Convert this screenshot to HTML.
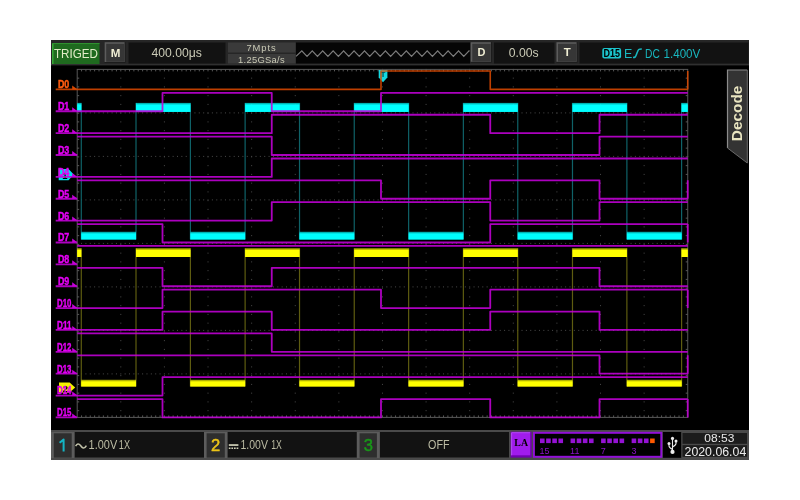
<!DOCTYPE html>
<html><head><meta charset="utf-8"><style>
html,body{margin:0;padding:0;background:#fff;width:800px;height:500px;overflow:hidden}
svg{display:block;font-family:"Liberation Sans",sans-serif;will-change:transform}
</style></head><body>
<svg width="800" height="500" viewBox="0 0 800 500">
<rect x="51" y="40" width="698" height="420" fill="#000"/>
<rect x="51" y="40" width="698" height="25" fill="#262626"/>
<rect x="51" y="63.8" width="698" height="1.6" fill="#303030"/>
<rect x="52" y="43" width="47.5" height="21" fill="#1f6a1f"/>
<rect x="52" y="43" width="1.5" height="21" fill="#36a636"/>
<rect x="52" y="43" width="47.5" height="1" fill="#2f8f2f"/>
<text x="76" y="58.2" font-size="12.6" fill="#e2ecc8" text-anchor="middle" textLength="44" lengthAdjust="spacingAndGlyphs">TRIGED</text>
<rect x="104.6" y="42.2" width="21" height="20.8" fill="#1c1c1c"/>
<rect x="104.6" y="42.2" width="20" height="19.8" fill="#5c5c5c"/>
<rect x="106.19999999999999" y="43.800000000000004" width="18.2" height="18.0" fill="#363636"/>
<text x="115.5" y="56.6" font-size="11.6" font-weight="bold" fill="#f0eed4" text-anchor="middle">M</text>
<rect x="128.5" y="42.5" width="97" height="21" fill="#121212"/>
<text x="176.7" y="57" font-size="12.2" fill="#cacab6" text-anchor="middle">400.00μs</text>
<rect x="228" y="42.5" width="67.5" height="10" fill="#3a3a3a"/>
<rect x="228" y="54" width="67.5" height="9.5" fill="#3a3a3a"/>
<text x="261.5" y="50.9" font-size="9.4" fill="#cacab6" text-anchor="middle" letter-spacing="0.9">7Mpts</text>
<text x="261.5" y="62.6" font-size="9.4" fill="#cacab6" text-anchor="middle" letter-spacing="0.3">1.25GSa/s</text>
<rect x="296" y="42.5" width="174" height="21" fill="#050505"/>
<polyline points="296.00,56.40 301.80,50.80 307.03,56.40 312.25,50.80 317.48,56.40 322.70,50.80 327.93,56.40 333.15,50.80 338.38,56.40 343.60,50.80 348.83,56.40 354.05,50.80 359.28,56.40 364.50,50.80 369.73,56.40 374.95,50.80 380.18,56.40 385.40,50.80 390.62,56.40 395.85,50.80 401.08,56.40 406.30,50.80 411.53,56.40 416.75,50.80 421.98,56.40 427.20,50.80 432.43,56.40 437.65,50.80 442.88,56.40 448.10,50.80 453.33,56.40 458.55,50.80 463.78,56.40 469.00,50.80 469.50,51.34" stroke="#7c7c7c" stroke-width="1.25" fill="none"/>
<rect x="470.7" y="42.2" width="21.2" height="20.6" fill="#1c1c1c"/>
<rect x="470.7" y="42.2" width="20.2" height="19.6" fill="#5c5c5c"/>
<rect x="472.3" y="43.800000000000004" width="18.4" height="17.8" fill="#363636"/>
<text x="481.6" y="56.2" font-size="11" font-weight="bold" fill="#f0eed4" text-anchor="middle">D</text>
<rect x="494" y="42.5" width="60.5" height="21" fill="#121212"/>
<text x="523.7" y="57" font-size="12.2" fill="#cacab6" text-anchor="middle">0.00s</text>
<rect x="556.4" y="42.2" width="21.2" height="20.6" fill="#1c1c1c"/>
<rect x="556.4" y="42.2" width="20.2" height="19.6" fill="#5c5c5c"/>
<rect x="558.0" y="43.800000000000004" width="18.4" height="17.8" fill="#363636"/>
<text x="567.2" y="56.4" font-size="11.4" font-weight="bold" fill="#f0eed4" text-anchor="middle">T</text>
<rect x="579.5" y="42.5" width="169" height="21" fill="#121212"/>
<rect x="602.3" y="48" width="18.8" height="10.6" rx="2" fill="#1cc4cc"/>
<text x="611.7" y="57.2" font-size="10.2" font-weight="bold" fill="#000" text-anchor="middle" textLength="16.4" lengthAdjust="spacingAndGlyphs">D15</text>
<text x="624" y="58" font-size="12.4" fill="#19b6be">E</text>
<path d="M633 57.5 C635.5 57.5 635.5 57 637 53 C638.5 49 638.5 49 641.8 49" stroke="#19b6be" stroke-width="1.6" fill="none"/>
<text x="645" y="58" font-size="12.4" fill="#19b6be" textLength="14.8" lengthAdjust="spacingAndGlyphs">DC</text>
<text x="663.5" y="58" font-size="12.4" fill="#19b6be" textLength="36.8" lengthAdjust="spacingAndGlyphs">1.400V</text>
<path d="M76.70 112.90h1M81.06 112.90h1M85.42 112.90h1M89.78 112.90h1M94.14 112.90h1M98.50 112.90h1M102.87 112.90h1M107.23 112.90h1M111.59 112.90h1M115.95 112.90h1M120.31 112.90h1M124.67 112.90h1M129.03 112.90h1M133.39 112.90h1M137.75 112.90h1M142.12 112.90h1M146.48 112.90h1M150.84 112.90h1M155.20 112.90h1M159.56 112.90h1M163.92 112.90h1M168.28 112.90h1M172.64 112.90h1M177.00 112.90h1M181.36 112.90h1M185.73 112.90h1M190.09 112.90h1M194.45 112.90h1M198.81 112.90h1M203.17 112.90h1M207.53 112.90h1M211.89 112.90h1M216.25 112.90h1M220.61 112.90h1M224.97 112.90h1M229.33 112.90h1M233.70 112.90h1M238.06 112.90h1M242.42 112.90h1M246.78 112.90h1M251.14 112.90h1M255.50 112.90h1M259.86 112.90h1M264.22 112.90h1M268.58 112.90h1M272.94 112.90h1M277.31 112.90h1M281.67 112.90h1M286.03 112.90h1M290.39 112.90h1M294.75 112.90h1M299.11 112.90h1M303.47 112.90h1M307.83 112.90h1M312.19 112.90h1M316.56 112.90h1M320.92 112.90h1M325.28 112.90h1M329.64 112.90h1M334.00 112.90h1M338.36 112.90h1M342.72 112.90h1M347.08 112.90h1M351.44 112.90h1M355.80 112.90h1M360.17 112.90h1M364.53 112.90h1M368.89 112.90h1M373.25 112.90h1M377.61 112.90h1M381.97 112.90h1M386.33 112.90h1M390.69 112.90h1M395.05 112.90h1M399.41 112.90h1M403.77 112.90h1M408.14 112.90h1M412.50 112.90h1M416.86 112.90h1M421.22 112.90h1M425.58 112.90h1M429.94 112.90h1M434.30 112.90h1M438.66 112.90h1M443.02 112.90h1M447.38 112.90h1M451.75 112.90h1M456.11 112.90h1M460.47 112.90h1M464.83 112.90h1M469.19 112.90h1M473.55 112.90h1M477.91 112.90h1M482.27 112.90h1M486.63 112.90h1M490.99 112.90h1M495.36 112.90h1M499.72 112.90h1M504.08 112.90h1M508.44 112.90h1M512.80 112.90h1M517.16 112.90h1M521.52 112.90h1M525.88 112.90h1M530.24 112.90h1M534.61 112.90h1M538.97 112.90h1M543.33 112.90h1M547.69 112.90h1M552.05 112.90h1M556.41 112.90h1M560.77 112.90h1M565.13 112.90h1M569.49 112.90h1M573.85 112.90h1M578.22 112.90h1M582.58 112.90h1M586.94 112.90h1M591.30 112.90h1M595.66 112.90h1M600.02 112.90h1M604.38 112.90h1M608.74 112.90h1M613.10 112.90h1M617.46 112.90h1M621.83 112.90h1M626.19 112.90h1M630.55 112.90h1M634.91 112.90h1M639.27 112.90h1M643.63 112.90h1M647.99 112.90h1M652.35 112.90h1M656.71 112.90h1M661.07 112.90h1M665.44 112.90h1M669.80 112.90h1M674.16 112.90h1M678.52 112.90h1M682.88 112.90h1M687.24 112.90h1M76.70 156.40h1M81.06 156.40h1M85.42 156.40h1M89.78 156.40h1M94.14 156.40h1M98.50 156.40h1M102.87 156.40h1M107.23 156.40h1M111.59 156.40h1M115.95 156.40h1M120.31 156.40h1M124.67 156.40h1M129.03 156.40h1M133.39 156.40h1M137.75 156.40h1M142.12 156.40h1M146.48 156.40h1M150.84 156.40h1M155.20 156.40h1M159.56 156.40h1M163.92 156.40h1M168.28 156.40h1M172.64 156.40h1M177.00 156.40h1M181.36 156.40h1M185.73 156.40h1M190.09 156.40h1M194.45 156.40h1M198.81 156.40h1M203.17 156.40h1M207.53 156.40h1M211.89 156.40h1M216.25 156.40h1M220.61 156.40h1M224.97 156.40h1M229.33 156.40h1M233.70 156.40h1M238.06 156.40h1M242.42 156.40h1M246.78 156.40h1M251.14 156.40h1M255.50 156.40h1M259.86 156.40h1M264.22 156.40h1M268.58 156.40h1M272.94 156.40h1M277.31 156.40h1M281.67 156.40h1M286.03 156.40h1M290.39 156.40h1M294.75 156.40h1M299.11 156.40h1M303.47 156.40h1M307.83 156.40h1M312.19 156.40h1M316.56 156.40h1M320.92 156.40h1M325.28 156.40h1M329.64 156.40h1M334.00 156.40h1M338.36 156.40h1M342.72 156.40h1M347.08 156.40h1M351.44 156.40h1M355.80 156.40h1M360.17 156.40h1M364.53 156.40h1M368.89 156.40h1M373.25 156.40h1M377.61 156.40h1M381.97 156.40h1M386.33 156.40h1M390.69 156.40h1M395.05 156.40h1M399.41 156.40h1M403.77 156.40h1M408.14 156.40h1M412.50 156.40h1M416.86 156.40h1M421.22 156.40h1M425.58 156.40h1M429.94 156.40h1M434.30 156.40h1M438.66 156.40h1M443.02 156.40h1M447.38 156.40h1M451.75 156.40h1M456.11 156.40h1M460.47 156.40h1M464.83 156.40h1M469.19 156.40h1M473.55 156.40h1M477.91 156.40h1M482.27 156.40h1M486.63 156.40h1M490.99 156.40h1M495.36 156.40h1M499.72 156.40h1M504.08 156.40h1M508.44 156.40h1M512.80 156.40h1M517.16 156.40h1M521.52 156.40h1M525.88 156.40h1M530.24 156.40h1M534.61 156.40h1M538.97 156.40h1M543.33 156.40h1M547.69 156.40h1M552.05 156.40h1M556.41 156.40h1M560.77 156.40h1M565.13 156.40h1M569.49 156.40h1M573.85 156.40h1M578.22 156.40h1M582.58 156.40h1M586.94 156.40h1M591.30 156.40h1M595.66 156.40h1M600.02 156.40h1M604.38 156.40h1M608.74 156.40h1M613.10 156.40h1M617.46 156.40h1M621.83 156.40h1M626.19 156.40h1M630.55 156.40h1M634.91 156.40h1M639.27 156.40h1M643.63 156.40h1M647.99 156.40h1M652.35 156.40h1M656.71 156.40h1M661.07 156.40h1M665.44 156.40h1M669.80 156.40h1M674.16 156.40h1M678.52 156.40h1M682.88 156.40h1M687.24 156.40h1M76.70 199.90h1M81.06 199.90h1M85.42 199.90h1M89.78 199.90h1M94.14 199.90h1M98.50 199.90h1M102.87 199.90h1M107.23 199.90h1M111.59 199.90h1M115.95 199.90h1M120.31 199.90h1M124.67 199.90h1M129.03 199.90h1M133.39 199.90h1M137.75 199.90h1M142.12 199.90h1M146.48 199.90h1M150.84 199.90h1M155.20 199.90h1M159.56 199.90h1M163.92 199.90h1M168.28 199.90h1M172.64 199.90h1M177.00 199.90h1M181.36 199.90h1M185.73 199.90h1M190.09 199.90h1M194.45 199.90h1M198.81 199.90h1M203.17 199.90h1M207.53 199.90h1M211.89 199.90h1M216.25 199.90h1M220.61 199.90h1M224.97 199.90h1M229.33 199.90h1M233.70 199.90h1M238.06 199.90h1M242.42 199.90h1M246.78 199.90h1M251.14 199.90h1M255.50 199.90h1M259.86 199.90h1M264.22 199.90h1M268.58 199.90h1M272.94 199.90h1M277.31 199.90h1M281.67 199.90h1M286.03 199.90h1M290.39 199.90h1M294.75 199.90h1M299.11 199.90h1M303.47 199.90h1M307.83 199.90h1M312.19 199.90h1M316.56 199.90h1M320.92 199.90h1M325.28 199.90h1M329.64 199.90h1M334.00 199.90h1M338.36 199.90h1M342.72 199.90h1M347.08 199.90h1M351.44 199.90h1M355.80 199.90h1M360.17 199.90h1M364.53 199.90h1M368.89 199.90h1M373.25 199.90h1M377.61 199.90h1M381.97 199.90h1M386.33 199.90h1M390.69 199.90h1M395.05 199.90h1M399.41 199.90h1M403.77 199.90h1M408.14 199.90h1M412.50 199.90h1M416.86 199.90h1M421.22 199.90h1M425.58 199.90h1M429.94 199.90h1M434.30 199.90h1M438.66 199.90h1M443.02 199.90h1M447.38 199.90h1M451.75 199.90h1M456.11 199.90h1M460.47 199.90h1M464.83 199.90h1M469.19 199.90h1M473.55 199.90h1M477.91 199.90h1M482.27 199.90h1M486.63 199.90h1M490.99 199.90h1M495.36 199.90h1M499.72 199.90h1M504.08 199.90h1M508.44 199.90h1M512.80 199.90h1M517.16 199.90h1M521.52 199.90h1M525.88 199.90h1M530.24 199.90h1M534.61 199.90h1M538.97 199.90h1M543.33 199.90h1M547.69 199.90h1M552.05 199.90h1M556.41 199.90h1M560.77 199.90h1M565.13 199.90h1M569.49 199.90h1M573.85 199.90h1M578.22 199.90h1M582.58 199.90h1M586.94 199.90h1M591.30 199.90h1M595.66 199.90h1M600.02 199.90h1M604.38 199.90h1M608.74 199.90h1M613.10 199.90h1M617.46 199.90h1M621.83 199.90h1M626.19 199.90h1M630.55 199.90h1M634.91 199.90h1M639.27 199.90h1M643.63 199.90h1M647.99 199.90h1M652.35 199.90h1M656.71 199.90h1M661.07 199.90h1M665.44 199.90h1M669.80 199.90h1M674.16 199.90h1M678.52 199.90h1M682.88 199.90h1M687.24 199.90h1M76.70 243.40h1M81.06 243.40h1M85.42 243.40h1M89.78 243.40h1M94.14 243.40h1M98.50 243.40h1M102.87 243.40h1M107.23 243.40h1M111.59 243.40h1M115.95 243.40h1M120.31 243.40h1M124.67 243.40h1M129.03 243.40h1M133.39 243.40h1M137.75 243.40h1M142.12 243.40h1M146.48 243.40h1M150.84 243.40h1M155.20 243.40h1M159.56 243.40h1M163.92 243.40h1M168.28 243.40h1M172.64 243.40h1M177.00 243.40h1M181.36 243.40h1M185.73 243.40h1M190.09 243.40h1M194.45 243.40h1M198.81 243.40h1M203.17 243.40h1M207.53 243.40h1M211.89 243.40h1M216.25 243.40h1M220.61 243.40h1M224.97 243.40h1M229.33 243.40h1M233.70 243.40h1M238.06 243.40h1M242.42 243.40h1M246.78 243.40h1M251.14 243.40h1M255.50 243.40h1M259.86 243.40h1M264.22 243.40h1M268.58 243.40h1M272.94 243.40h1M277.31 243.40h1M281.67 243.40h1M286.03 243.40h1M290.39 243.40h1M294.75 243.40h1M299.11 243.40h1M303.47 243.40h1M307.83 243.40h1M312.19 243.40h1M316.56 243.40h1M320.92 243.40h1M325.28 243.40h1M329.64 243.40h1M334.00 243.40h1M338.36 243.40h1M342.72 243.40h1M347.08 243.40h1M351.44 243.40h1M355.80 243.40h1M360.17 243.40h1M364.53 243.40h1M368.89 243.40h1M373.25 243.40h1M377.61 243.40h1M381.97 243.40h1M386.33 243.40h1M390.69 243.40h1M395.05 243.40h1M399.41 243.40h1M403.77 243.40h1M408.14 243.40h1M412.50 243.40h1M416.86 243.40h1M421.22 243.40h1M425.58 243.40h1M429.94 243.40h1M434.30 243.40h1M438.66 243.40h1M443.02 243.40h1M447.38 243.40h1M451.75 243.40h1M456.11 243.40h1M460.47 243.40h1M464.83 243.40h1M469.19 243.40h1M473.55 243.40h1M477.91 243.40h1M482.27 243.40h1M486.63 243.40h1M490.99 243.40h1M495.36 243.40h1M499.72 243.40h1M504.08 243.40h1M508.44 243.40h1M512.80 243.40h1M517.16 243.40h1M521.52 243.40h1M525.88 243.40h1M530.24 243.40h1M534.61 243.40h1M538.97 243.40h1M543.33 243.40h1M547.69 243.40h1M552.05 243.40h1M556.41 243.40h1M560.77 243.40h1M565.13 243.40h1M569.49 243.40h1M573.85 243.40h1M578.22 243.40h1M582.58 243.40h1M586.94 243.40h1M591.30 243.40h1M595.66 243.40h1M600.02 243.40h1M604.38 243.40h1M608.74 243.40h1M613.10 243.40h1M617.46 243.40h1M621.83 243.40h1M626.19 243.40h1M630.55 243.40h1M634.91 243.40h1M639.27 243.40h1M643.63 243.40h1M647.99 243.40h1M652.35 243.40h1M656.71 243.40h1M661.07 243.40h1M665.44 243.40h1M669.80 243.40h1M674.16 243.40h1M678.52 243.40h1M682.88 243.40h1M687.24 243.40h1M76.70 286.90h1M81.06 286.90h1M85.42 286.90h1M89.78 286.90h1M94.14 286.90h1M98.50 286.90h1M102.87 286.90h1M107.23 286.90h1M111.59 286.90h1M115.95 286.90h1M120.31 286.90h1M124.67 286.90h1M129.03 286.90h1M133.39 286.90h1M137.75 286.90h1M142.12 286.90h1M146.48 286.90h1M150.84 286.90h1M155.20 286.90h1M159.56 286.90h1M163.92 286.90h1M168.28 286.90h1M172.64 286.90h1M177.00 286.90h1M181.36 286.90h1M185.73 286.90h1M190.09 286.90h1M194.45 286.90h1M198.81 286.90h1M203.17 286.90h1M207.53 286.90h1M211.89 286.90h1M216.25 286.90h1M220.61 286.90h1M224.97 286.90h1M229.33 286.90h1M233.70 286.90h1M238.06 286.90h1M242.42 286.90h1M246.78 286.90h1M251.14 286.90h1M255.50 286.90h1M259.86 286.90h1M264.22 286.90h1M268.58 286.90h1M272.94 286.90h1M277.31 286.90h1M281.67 286.90h1M286.03 286.90h1M290.39 286.90h1M294.75 286.90h1M299.11 286.90h1M303.47 286.90h1M307.83 286.90h1M312.19 286.90h1M316.56 286.90h1M320.92 286.90h1M325.28 286.90h1M329.64 286.90h1M334.00 286.90h1M338.36 286.90h1M342.72 286.90h1M347.08 286.90h1M351.44 286.90h1M355.80 286.90h1M360.17 286.90h1M364.53 286.90h1M368.89 286.90h1M373.25 286.90h1M377.61 286.90h1M381.97 286.90h1M386.33 286.90h1M390.69 286.90h1M395.05 286.90h1M399.41 286.90h1M403.77 286.90h1M408.14 286.90h1M412.50 286.90h1M416.86 286.90h1M421.22 286.90h1M425.58 286.90h1M429.94 286.90h1M434.30 286.90h1M438.66 286.90h1M443.02 286.90h1M447.38 286.90h1M451.75 286.90h1M456.11 286.90h1M460.47 286.90h1M464.83 286.90h1M469.19 286.90h1M473.55 286.90h1M477.91 286.90h1M482.27 286.90h1M486.63 286.90h1M490.99 286.90h1M495.36 286.90h1M499.72 286.90h1M504.08 286.90h1M508.44 286.90h1M512.80 286.90h1M517.16 286.90h1M521.52 286.90h1M525.88 286.90h1M530.24 286.90h1M534.61 286.90h1M538.97 286.90h1M543.33 286.90h1M547.69 286.90h1M552.05 286.90h1M556.41 286.90h1M560.77 286.90h1M565.13 286.90h1M569.49 286.90h1M573.85 286.90h1M578.22 286.90h1M582.58 286.90h1M586.94 286.90h1M591.30 286.90h1M595.66 286.90h1M600.02 286.90h1M604.38 286.90h1M608.74 286.90h1M613.10 286.90h1M617.46 286.90h1M621.83 286.90h1M626.19 286.90h1M630.55 286.90h1M634.91 286.90h1M639.27 286.90h1M643.63 286.90h1M647.99 286.90h1M652.35 286.90h1M656.71 286.90h1M661.07 286.90h1M665.44 286.90h1M669.80 286.90h1M674.16 286.90h1M678.52 286.90h1M682.88 286.90h1M687.24 286.90h1M76.70 330.40h1M81.06 330.40h1M85.42 330.40h1M89.78 330.40h1M94.14 330.40h1M98.50 330.40h1M102.87 330.40h1M107.23 330.40h1M111.59 330.40h1M115.95 330.40h1M120.31 330.40h1M124.67 330.40h1M129.03 330.40h1M133.39 330.40h1M137.75 330.40h1M142.12 330.40h1M146.48 330.40h1M150.84 330.40h1M155.20 330.40h1M159.56 330.40h1M163.92 330.40h1M168.28 330.40h1M172.64 330.40h1M177.00 330.40h1M181.36 330.40h1M185.73 330.40h1M190.09 330.40h1M194.45 330.40h1M198.81 330.40h1M203.17 330.40h1M207.53 330.40h1M211.89 330.40h1M216.25 330.40h1M220.61 330.40h1M224.97 330.40h1M229.33 330.40h1M233.70 330.40h1M238.06 330.40h1M242.42 330.40h1M246.78 330.40h1M251.14 330.40h1M255.50 330.40h1M259.86 330.40h1M264.22 330.40h1M268.58 330.40h1M272.94 330.40h1M277.31 330.40h1M281.67 330.40h1M286.03 330.40h1M290.39 330.40h1M294.75 330.40h1M299.11 330.40h1M303.47 330.40h1M307.83 330.40h1M312.19 330.40h1M316.56 330.40h1M320.92 330.40h1M325.28 330.40h1M329.64 330.40h1M334.00 330.40h1M338.36 330.40h1M342.72 330.40h1M347.08 330.40h1M351.44 330.40h1M355.80 330.40h1M360.17 330.40h1M364.53 330.40h1M368.89 330.40h1M373.25 330.40h1M377.61 330.40h1M381.97 330.40h1M386.33 330.40h1M390.69 330.40h1M395.05 330.40h1M399.41 330.40h1M403.77 330.40h1M408.14 330.40h1M412.50 330.40h1M416.86 330.40h1M421.22 330.40h1M425.58 330.40h1M429.94 330.40h1M434.30 330.40h1M438.66 330.40h1M443.02 330.40h1M447.38 330.40h1M451.75 330.40h1M456.11 330.40h1M460.47 330.40h1M464.83 330.40h1M469.19 330.40h1M473.55 330.40h1M477.91 330.40h1M482.27 330.40h1M486.63 330.40h1M490.99 330.40h1M495.36 330.40h1M499.72 330.40h1M504.08 330.40h1M508.44 330.40h1M512.80 330.40h1M517.16 330.40h1M521.52 330.40h1M525.88 330.40h1M530.24 330.40h1M534.61 330.40h1M538.97 330.40h1M543.33 330.40h1M547.69 330.40h1M552.05 330.40h1M556.41 330.40h1M560.77 330.40h1M565.13 330.40h1M569.49 330.40h1M573.85 330.40h1M578.22 330.40h1M582.58 330.40h1M586.94 330.40h1M591.30 330.40h1M595.66 330.40h1M600.02 330.40h1M604.38 330.40h1M608.74 330.40h1M613.10 330.40h1M617.46 330.40h1M621.83 330.40h1M626.19 330.40h1M630.55 330.40h1M634.91 330.40h1M639.27 330.40h1M643.63 330.40h1M647.99 330.40h1M652.35 330.40h1M656.71 330.40h1M661.07 330.40h1M665.44 330.40h1M669.80 330.40h1M674.16 330.40h1M678.52 330.40h1M682.88 330.40h1M687.24 330.40h1M76.70 373.90h1M81.06 373.90h1M85.42 373.90h1M89.78 373.90h1M94.14 373.90h1M98.50 373.90h1M102.87 373.90h1M107.23 373.90h1M111.59 373.90h1M115.95 373.90h1M120.31 373.90h1M124.67 373.90h1M129.03 373.90h1M133.39 373.90h1M137.75 373.90h1M142.12 373.90h1M146.48 373.90h1M150.84 373.90h1M155.20 373.90h1M159.56 373.90h1M163.92 373.90h1M168.28 373.90h1M172.64 373.90h1M177.00 373.90h1M181.36 373.90h1M185.73 373.90h1M190.09 373.90h1M194.45 373.90h1M198.81 373.90h1M203.17 373.90h1M207.53 373.90h1M211.89 373.90h1M216.25 373.90h1M220.61 373.90h1M224.97 373.90h1M229.33 373.90h1M233.70 373.90h1M238.06 373.90h1M242.42 373.90h1M246.78 373.90h1M251.14 373.90h1M255.50 373.90h1M259.86 373.90h1M264.22 373.90h1M268.58 373.90h1M272.94 373.90h1M277.31 373.90h1M281.67 373.90h1M286.03 373.90h1M290.39 373.90h1M294.75 373.90h1M299.11 373.90h1M303.47 373.90h1M307.83 373.90h1M312.19 373.90h1M316.56 373.90h1M320.92 373.90h1M325.28 373.90h1M329.64 373.90h1M334.00 373.90h1M338.36 373.90h1M342.72 373.90h1M347.08 373.90h1M351.44 373.90h1M355.80 373.90h1M360.17 373.90h1M364.53 373.90h1M368.89 373.90h1M373.25 373.90h1M377.61 373.90h1M381.97 373.90h1M386.33 373.90h1M390.69 373.90h1M395.05 373.90h1M399.41 373.90h1M403.77 373.90h1M408.14 373.90h1M412.50 373.90h1M416.86 373.90h1M421.22 373.90h1M425.58 373.90h1M429.94 373.90h1M434.30 373.90h1M438.66 373.90h1M443.02 373.90h1M447.38 373.90h1M451.75 373.90h1M456.11 373.90h1M460.47 373.90h1M464.83 373.90h1M469.19 373.90h1M473.55 373.90h1M477.91 373.90h1M482.27 373.90h1M486.63 373.90h1M490.99 373.90h1M495.36 373.90h1M499.72 373.90h1M504.08 373.90h1M508.44 373.90h1M512.80 373.90h1M517.16 373.90h1M521.52 373.90h1M525.88 373.90h1M530.24 373.90h1M534.61 373.90h1M538.97 373.90h1M543.33 373.90h1M547.69 373.90h1M552.05 373.90h1M556.41 373.90h1M560.77 373.90h1M565.13 373.90h1M569.49 373.90h1M573.85 373.90h1M578.22 373.90h1M582.58 373.90h1M586.94 373.90h1M591.30 373.90h1M595.66 373.90h1M600.02 373.90h1M604.38 373.90h1M608.74 373.90h1M613.10 373.90h1M617.46 373.90h1M621.83 373.90h1M626.19 373.90h1M630.55 373.90h1M634.91 373.90h1M639.27 373.90h1M643.63 373.90h1M647.99 373.90h1M652.35 373.90h1M656.71 373.90h1M661.07 373.90h1M665.44 373.90h1M669.80 373.90h1M674.16 373.90h1M678.52 373.90h1M682.88 373.90h1M687.24 373.90h1M120.31 69.40h1M120.31 78.15h1M120.31 86.90h1M120.31 95.65h1M120.31 104.40h1M120.31 113.15h1M120.31 121.90h1M120.31 130.65h1M120.31 139.40h1M120.31 148.15h1M120.31 156.90h1M120.31 165.65h1M120.31 174.40h1M120.31 183.15h1M120.31 191.90h1M120.31 200.65h1M120.31 209.40h1M120.31 218.15h1M120.31 226.90h1M120.31 235.65h1M120.31 244.40h1M120.31 253.15h1M120.31 261.90h1M120.31 270.65h1M120.31 279.40h1M120.31 288.15h1M120.31 296.90h1M120.31 305.65h1M120.31 314.40h1M120.31 323.15h1M120.31 331.90h1M120.31 340.65h1M120.31 349.40h1M120.31 358.15h1M120.31 366.90h1M120.31 375.65h1M120.31 384.40h1M120.31 393.15h1M120.31 401.90h1M120.31 410.65h1M163.92 69.40h1M163.92 78.15h1M163.92 86.90h1M163.92 95.65h1M163.92 104.40h1M163.92 113.15h1M163.92 121.90h1M163.92 130.65h1M163.92 139.40h1M163.92 148.15h1M163.92 156.90h1M163.92 165.65h1M163.92 174.40h1M163.92 183.15h1M163.92 191.90h1M163.92 200.65h1M163.92 209.40h1M163.92 218.15h1M163.92 226.90h1M163.92 235.65h1M163.92 244.40h1M163.92 253.15h1M163.92 261.90h1M163.92 270.65h1M163.92 279.40h1M163.92 288.15h1M163.92 296.90h1M163.92 305.65h1M163.92 314.40h1M163.92 323.15h1M163.92 331.90h1M163.92 340.65h1M163.92 349.40h1M163.92 358.15h1M163.92 366.90h1M163.92 375.65h1M163.92 384.40h1M163.92 393.15h1M163.92 401.90h1M163.92 410.65h1M207.53 69.40h1M207.53 78.15h1M207.53 86.90h1M207.53 95.65h1M207.53 104.40h1M207.53 113.15h1M207.53 121.90h1M207.53 130.65h1M207.53 139.40h1M207.53 148.15h1M207.53 156.90h1M207.53 165.65h1M207.53 174.40h1M207.53 183.15h1M207.53 191.90h1M207.53 200.65h1M207.53 209.40h1M207.53 218.15h1M207.53 226.90h1M207.53 235.65h1M207.53 244.40h1M207.53 253.15h1M207.53 261.90h1M207.53 270.65h1M207.53 279.40h1M207.53 288.15h1M207.53 296.90h1M207.53 305.65h1M207.53 314.40h1M207.53 323.15h1M207.53 331.90h1M207.53 340.65h1M207.53 349.40h1M207.53 358.15h1M207.53 366.90h1M207.53 375.65h1M207.53 384.40h1M207.53 393.15h1M207.53 401.90h1M207.53 410.65h1M251.14 69.40h1M251.14 78.15h1M251.14 86.90h1M251.14 95.65h1M251.14 104.40h1M251.14 113.15h1M251.14 121.90h1M251.14 130.65h1M251.14 139.40h1M251.14 148.15h1M251.14 156.90h1M251.14 165.65h1M251.14 174.40h1M251.14 183.15h1M251.14 191.90h1M251.14 200.65h1M251.14 209.40h1M251.14 218.15h1M251.14 226.90h1M251.14 235.65h1M251.14 244.40h1M251.14 253.15h1M251.14 261.90h1M251.14 270.65h1M251.14 279.40h1M251.14 288.15h1M251.14 296.90h1M251.14 305.65h1M251.14 314.40h1M251.14 323.15h1M251.14 331.90h1M251.14 340.65h1M251.14 349.40h1M251.14 358.15h1M251.14 366.90h1M251.14 375.65h1M251.14 384.40h1M251.14 393.15h1M251.14 401.90h1M251.14 410.65h1M294.75 69.40h1M294.75 78.15h1M294.75 86.90h1M294.75 95.65h1M294.75 104.40h1M294.75 113.15h1M294.75 121.90h1M294.75 130.65h1M294.75 139.40h1M294.75 148.15h1M294.75 156.90h1M294.75 165.65h1M294.75 174.40h1M294.75 183.15h1M294.75 191.90h1M294.75 200.65h1M294.75 209.40h1M294.75 218.15h1M294.75 226.90h1M294.75 235.65h1M294.75 244.40h1M294.75 253.15h1M294.75 261.90h1M294.75 270.65h1M294.75 279.40h1M294.75 288.15h1M294.75 296.90h1M294.75 305.65h1M294.75 314.40h1M294.75 323.15h1M294.75 331.90h1M294.75 340.65h1M294.75 349.40h1M294.75 358.15h1M294.75 366.90h1M294.75 375.65h1M294.75 384.40h1M294.75 393.15h1M294.75 401.90h1M294.75 410.65h1M338.36 69.40h1M338.36 78.15h1M338.36 86.90h1M338.36 95.65h1M338.36 104.40h1M338.36 113.15h1M338.36 121.90h1M338.36 130.65h1M338.36 139.40h1M338.36 148.15h1M338.36 156.90h1M338.36 165.65h1M338.36 174.40h1M338.36 183.15h1M338.36 191.90h1M338.36 200.65h1M338.36 209.40h1M338.36 218.15h1M338.36 226.90h1M338.36 235.65h1M338.36 244.40h1M338.36 253.15h1M338.36 261.90h1M338.36 270.65h1M338.36 279.40h1M338.36 288.15h1M338.36 296.90h1M338.36 305.65h1M338.36 314.40h1M338.36 323.15h1M338.36 331.90h1M338.36 340.65h1M338.36 349.40h1M338.36 358.15h1M338.36 366.90h1M338.36 375.65h1M338.36 384.40h1M338.36 393.15h1M338.36 401.90h1M338.36 410.65h1M381.97 69.40h1M381.97 78.15h1M381.97 86.90h1M381.97 95.65h1M381.97 104.40h1M381.97 113.15h1M381.97 121.90h1M381.97 130.65h1M381.97 139.40h1M381.97 148.15h1M381.97 156.90h1M381.97 165.65h1M381.97 174.40h1M381.97 183.15h1M381.97 191.90h1M381.97 200.65h1M381.97 209.40h1M381.97 218.15h1M381.97 226.90h1M381.97 235.65h1M381.97 244.40h1M381.97 253.15h1M381.97 261.90h1M381.97 270.65h1M381.97 279.40h1M381.97 288.15h1M381.97 296.90h1M381.97 305.65h1M381.97 314.40h1M381.97 323.15h1M381.97 331.90h1M381.97 340.65h1M381.97 349.40h1M381.97 358.15h1M381.97 366.90h1M381.97 375.65h1M381.97 384.40h1M381.97 393.15h1M381.97 401.90h1M381.97 410.65h1M425.58 69.40h1M425.58 78.15h1M425.58 86.90h1M425.58 95.65h1M425.58 104.40h1M425.58 113.15h1M425.58 121.90h1M425.58 130.65h1M425.58 139.40h1M425.58 148.15h1M425.58 156.90h1M425.58 165.65h1M425.58 174.40h1M425.58 183.15h1M425.58 191.90h1M425.58 200.65h1M425.58 209.40h1M425.58 218.15h1M425.58 226.90h1M425.58 235.65h1M425.58 244.40h1M425.58 253.15h1M425.58 261.90h1M425.58 270.65h1M425.58 279.40h1M425.58 288.15h1M425.58 296.90h1M425.58 305.65h1M425.58 314.40h1M425.58 323.15h1M425.58 331.90h1M425.58 340.65h1M425.58 349.40h1M425.58 358.15h1M425.58 366.90h1M425.58 375.65h1M425.58 384.40h1M425.58 393.15h1M425.58 401.90h1M425.58 410.65h1M469.19 69.40h1M469.19 78.15h1M469.19 86.90h1M469.19 95.65h1M469.19 104.40h1M469.19 113.15h1M469.19 121.90h1M469.19 130.65h1M469.19 139.40h1M469.19 148.15h1M469.19 156.90h1M469.19 165.65h1M469.19 174.40h1M469.19 183.15h1M469.19 191.90h1M469.19 200.65h1M469.19 209.40h1M469.19 218.15h1M469.19 226.90h1M469.19 235.65h1M469.19 244.40h1M469.19 253.15h1M469.19 261.90h1M469.19 270.65h1M469.19 279.40h1M469.19 288.15h1M469.19 296.90h1M469.19 305.65h1M469.19 314.40h1M469.19 323.15h1M469.19 331.90h1M469.19 340.65h1M469.19 349.40h1M469.19 358.15h1M469.19 366.90h1M469.19 375.65h1M469.19 384.40h1M469.19 393.15h1M469.19 401.90h1M469.19 410.65h1M512.80 69.40h1M512.80 78.15h1M512.80 86.90h1M512.80 95.65h1M512.80 104.40h1M512.80 113.15h1M512.80 121.90h1M512.80 130.65h1M512.80 139.40h1M512.80 148.15h1M512.80 156.90h1M512.80 165.65h1M512.80 174.40h1M512.80 183.15h1M512.80 191.90h1M512.80 200.65h1M512.80 209.40h1M512.80 218.15h1M512.80 226.90h1M512.80 235.65h1M512.80 244.40h1M512.80 253.15h1M512.80 261.90h1M512.80 270.65h1M512.80 279.40h1M512.80 288.15h1M512.80 296.90h1M512.80 305.65h1M512.80 314.40h1M512.80 323.15h1M512.80 331.90h1M512.80 340.65h1M512.80 349.40h1M512.80 358.15h1M512.80 366.90h1M512.80 375.65h1M512.80 384.40h1M512.80 393.15h1M512.80 401.90h1M512.80 410.65h1M556.41 69.40h1M556.41 78.15h1M556.41 86.90h1M556.41 95.65h1M556.41 104.40h1M556.41 113.15h1M556.41 121.90h1M556.41 130.65h1M556.41 139.40h1M556.41 148.15h1M556.41 156.90h1M556.41 165.65h1M556.41 174.40h1M556.41 183.15h1M556.41 191.90h1M556.41 200.65h1M556.41 209.40h1M556.41 218.15h1M556.41 226.90h1M556.41 235.65h1M556.41 244.40h1M556.41 253.15h1M556.41 261.90h1M556.41 270.65h1M556.41 279.40h1M556.41 288.15h1M556.41 296.90h1M556.41 305.65h1M556.41 314.40h1M556.41 323.15h1M556.41 331.90h1M556.41 340.65h1M556.41 349.40h1M556.41 358.15h1M556.41 366.90h1M556.41 375.65h1M556.41 384.40h1M556.41 393.15h1M556.41 401.90h1M556.41 410.65h1M600.02 69.40h1M600.02 78.15h1M600.02 86.90h1M600.02 95.65h1M600.02 104.40h1M600.02 113.15h1M600.02 121.90h1M600.02 130.65h1M600.02 139.40h1M600.02 148.15h1M600.02 156.90h1M600.02 165.65h1M600.02 174.40h1M600.02 183.15h1M600.02 191.90h1M600.02 200.65h1M600.02 209.40h1M600.02 218.15h1M600.02 226.90h1M600.02 235.65h1M600.02 244.40h1M600.02 253.15h1M600.02 261.90h1M600.02 270.65h1M600.02 279.40h1M600.02 288.15h1M600.02 296.90h1M600.02 305.65h1M600.02 314.40h1M600.02 323.15h1M600.02 331.90h1M600.02 340.65h1M600.02 349.40h1M600.02 358.15h1M600.02 366.90h1M600.02 375.65h1M600.02 384.40h1M600.02 393.15h1M600.02 401.90h1M600.02 410.65h1M643.63 69.40h1M643.63 78.15h1M643.63 86.90h1M643.63 95.65h1M643.63 104.40h1M643.63 113.15h1M643.63 121.90h1M643.63 130.65h1M643.63 139.40h1M643.63 148.15h1M643.63 156.90h1M643.63 165.65h1M643.63 174.40h1M643.63 183.15h1M643.63 191.90h1M643.63 200.65h1M643.63 209.40h1M643.63 218.15h1M643.63 226.90h1M643.63 235.65h1M643.63 244.40h1M643.63 253.15h1M643.63 261.90h1M643.63 270.65h1M643.63 279.40h1M643.63 288.15h1M643.63 296.90h1M643.63 305.65h1M643.63 314.40h1M643.63 323.15h1M643.63 331.90h1M643.63 340.65h1M643.63 349.40h1M643.63 358.15h1M643.63 366.90h1M643.63 375.65h1M643.63 384.40h1M643.63 393.15h1M643.63 401.90h1M643.63 410.65h1" stroke="#4a4a4a" stroke-width="1" fill="none"/>
<rect x="77.2" y="69.4" width="610.54" height="348.00" fill="none" stroke="#585858" stroke-width="1"/>
<path d="M81.56 69.4v2M81.56 417.40v-2M85.92 69.4v2M85.92 417.40v-2M90.28 69.4v2M90.28 417.40v-2M94.64 69.4v2M94.64 417.40v-2M99.00 69.4v2M99.00 417.40v-2M103.37 69.4v2M103.37 417.40v-2M107.73 69.4v2M107.73 417.40v-2M112.09 69.4v2M112.09 417.40v-2M116.45 69.4v2M116.45 417.40v-2M120.81 69.4v2M120.81 417.40v-2M125.17 69.4v2M125.17 417.40v-2M129.53 69.4v2M129.53 417.40v-2M133.89 69.4v2M133.89 417.40v-2M138.25 69.4v2M138.25 417.40v-2M142.62 69.4v2M142.62 417.40v-2M146.98 69.4v2M146.98 417.40v-2M151.34 69.4v2M151.34 417.40v-2M155.70 69.4v2M155.70 417.40v-2M160.06 69.4v2M160.06 417.40v-2M164.42 69.4v2M164.42 417.40v-2M168.78 69.4v2M168.78 417.40v-2M173.14 69.4v2M173.14 417.40v-2M177.50 69.4v2M177.50 417.40v-2M181.86 69.4v2M181.86 417.40v-2M186.23 69.4v2M186.23 417.40v-2M190.59 69.4v2M190.59 417.40v-2M194.95 69.4v2M194.95 417.40v-2M199.31 69.4v2M199.31 417.40v-2M203.67 69.4v2M203.67 417.40v-2M208.03 69.4v2M208.03 417.40v-2M212.39 69.4v2M212.39 417.40v-2M216.75 69.4v2M216.75 417.40v-2M221.11 69.4v2M221.11 417.40v-2M225.47 69.4v2M225.47 417.40v-2M229.83 69.4v2M229.83 417.40v-2M234.20 69.4v2M234.20 417.40v-2M238.56 69.4v2M238.56 417.40v-2M242.92 69.4v2M242.92 417.40v-2M247.28 69.4v2M247.28 417.40v-2M251.64 69.4v2M251.64 417.40v-2M256.00 69.4v2M256.00 417.40v-2M260.36 69.4v2M260.36 417.40v-2M264.72 69.4v2M264.72 417.40v-2M269.08 69.4v2M269.08 417.40v-2M273.44 69.4v2M273.44 417.40v-2M277.81 69.4v2M277.81 417.40v-2M282.17 69.4v2M282.17 417.40v-2M286.53 69.4v2M286.53 417.40v-2M290.89 69.4v2M290.89 417.40v-2M295.25 69.4v2M295.25 417.40v-2M299.61 69.4v2M299.61 417.40v-2M303.97 69.4v2M303.97 417.40v-2M308.33 69.4v2M308.33 417.40v-2M312.69 69.4v2M312.69 417.40v-2M317.06 69.4v2M317.06 417.40v-2M321.42 69.4v2M321.42 417.40v-2M325.78 69.4v2M325.78 417.40v-2M330.14 69.4v2M330.14 417.40v-2M334.50 69.4v2M334.50 417.40v-2M338.86 69.4v2M338.86 417.40v-2M343.22 69.4v2M343.22 417.40v-2M347.58 69.4v2M347.58 417.40v-2M351.94 69.4v2M351.94 417.40v-2M356.30 69.4v2M356.30 417.40v-2M360.67 69.4v2M360.67 417.40v-2M365.03 69.4v2M365.03 417.40v-2M369.39 69.4v2M369.39 417.40v-2M373.75 69.4v2M373.75 417.40v-2M378.11 69.4v2M378.11 417.40v-2M382.47 69.4v2M382.47 417.40v-2M386.83 69.4v2M386.83 417.40v-2M391.19 69.4v2M391.19 417.40v-2M395.55 69.4v2M395.55 417.40v-2M399.91 69.4v2M399.91 417.40v-2M404.27 69.4v2M404.27 417.40v-2M408.64 69.4v2M408.64 417.40v-2M413.00 69.4v2M413.00 417.40v-2M417.36 69.4v2M417.36 417.40v-2M421.72 69.4v2M421.72 417.40v-2M426.08 69.4v2M426.08 417.40v-2M430.44 69.4v2M430.44 417.40v-2M434.80 69.4v2M434.80 417.40v-2M439.16 69.4v2M439.16 417.40v-2M443.52 69.4v2M443.52 417.40v-2M447.88 69.4v2M447.88 417.40v-2M452.25 69.4v2M452.25 417.40v-2M456.61 69.4v2M456.61 417.40v-2M460.97 69.4v2M460.97 417.40v-2M465.33 69.4v2M465.33 417.40v-2M469.69 69.4v2M469.69 417.40v-2M474.05 69.4v2M474.05 417.40v-2M478.41 69.4v2M478.41 417.40v-2M482.77 69.4v2M482.77 417.40v-2M487.13 69.4v2M487.13 417.40v-2M491.49 69.4v2M491.49 417.40v-2M495.86 69.4v2M495.86 417.40v-2M500.22 69.4v2M500.22 417.40v-2M504.58 69.4v2M504.58 417.40v-2M508.94 69.4v2M508.94 417.40v-2M513.30 69.4v2M513.30 417.40v-2M517.66 69.4v2M517.66 417.40v-2M522.02 69.4v2M522.02 417.40v-2M526.38 69.4v2M526.38 417.40v-2M530.74 69.4v2M530.74 417.40v-2M535.11 69.4v2M535.11 417.40v-2M539.47 69.4v2M539.47 417.40v-2M543.83 69.4v2M543.83 417.40v-2M548.19 69.4v2M548.19 417.40v-2M552.55 69.4v2M552.55 417.40v-2M556.91 69.4v2M556.91 417.40v-2M561.27 69.4v2M561.27 417.40v-2M565.63 69.4v2M565.63 417.40v-2M569.99 69.4v2M569.99 417.40v-2M574.35 69.4v2M574.35 417.40v-2M578.72 69.4v2M578.72 417.40v-2M583.08 69.4v2M583.08 417.40v-2M587.44 69.4v2M587.44 417.40v-2M591.80 69.4v2M591.80 417.40v-2M596.16 69.4v2M596.16 417.40v-2M600.52 69.4v2M600.52 417.40v-2M604.88 69.4v2M604.88 417.40v-2M609.24 69.4v2M609.24 417.40v-2M613.60 69.4v2M613.60 417.40v-2M617.96 69.4v2M617.96 417.40v-2M622.33 69.4v2M622.33 417.40v-2M626.69 69.4v2M626.69 417.40v-2M631.05 69.4v2M631.05 417.40v-2M635.41 69.4v2M635.41 417.40v-2M639.77 69.4v2M639.77 417.40v-2M644.13 69.4v2M644.13 417.40v-2M648.49 69.4v2M648.49 417.40v-2M652.85 69.4v2M652.85 417.40v-2M657.21 69.4v2M657.21 417.40v-2M661.57 69.4v2M661.57 417.40v-2M665.94 69.4v2M665.94 417.40v-2M670.30 69.4v2M670.30 417.40v-2M674.66 69.4v2M674.66 417.40v-2M679.02 69.4v2M679.02 417.40v-2M683.38 69.4v2M683.38 417.40v-2M77.2 78.15h2M687.74 78.15h-2M77.2 86.90h2M687.74 86.90h-2M77.2 95.65h2M687.74 95.65h-2M77.2 104.40h2M687.74 104.40h-2M77.2 113.15h2M687.74 113.15h-2M77.2 121.90h2M687.74 121.90h-2M77.2 130.65h2M687.74 130.65h-2M77.2 139.40h2M687.74 139.40h-2M77.2 148.15h2M687.74 148.15h-2M77.2 156.90h2M687.74 156.90h-2M77.2 165.65h2M687.74 165.65h-2M77.2 174.40h2M687.74 174.40h-2M77.2 183.15h2M687.74 183.15h-2M77.2 191.90h2M687.74 191.90h-2M77.2 200.65h2M687.74 200.65h-2M77.2 209.40h2M687.74 209.40h-2M77.2 218.15h2M687.74 218.15h-2M77.2 226.90h2M687.74 226.90h-2M77.2 235.65h2M687.74 235.65h-2M77.2 244.40h2M687.74 244.40h-2M77.2 253.15h2M687.74 253.15h-2M77.2 261.90h2M687.74 261.90h-2M77.2 270.65h2M687.74 270.65h-2M77.2 279.40h2M687.74 279.40h-2M77.2 288.15h2M687.74 288.15h-2M77.2 296.90h2M687.74 296.90h-2M77.2 305.65h2M687.74 305.65h-2M77.2 314.40h2M687.74 314.40h-2M77.2 323.15h2M687.74 323.15h-2M77.2 331.90h2M687.74 331.90h-2M77.2 340.65h2M687.74 340.65h-2M77.2 349.40h2M687.74 349.40h-2M77.2 358.15h2M687.74 358.15h-2M77.2 366.90h2M687.74 366.90h-2M77.2 375.65h2M687.74 375.65h-2M77.2 384.40h2M687.74 384.40h-2M77.2 393.15h2M687.74 393.15h-2M77.2 401.90h2M687.74 401.90h-2M77.2 410.65h2M687.74 410.65h-2" stroke="#585858" stroke-width="1" fill="none"/>
<rect x="80.68" y="102.90" width="1.2" height="136.60" fill="#0f6268"/>
<rect x="135.40" y="102.90" width="1.2" height="136.60" fill="#0f6268"/>
<rect x="189.80" y="102.90" width="1.2" height="136.60" fill="#0f6268"/>
<rect x="244.52" y="102.90" width="1.2" height="136.60" fill="#0f6268"/>
<rect x="298.92" y="102.90" width="1.2" height="136.60" fill="#0f6268"/>
<rect x="353.64" y="102.90" width="1.2" height="136.60" fill="#0f6268"/>
<rect x="408.04" y="102.90" width="1.2" height="136.60" fill="#0f6268"/>
<rect x="462.76" y="102.90" width="1.2" height="136.60" fill="#0f6268"/>
<rect x="517.16" y="102.90" width="1.2" height="136.60" fill="#0f6268"/>
<rect x="571.88" y="102.90" width="1.2" height="136.60" fill="#0f6268"/>
<rect x="626.28" y="102.90" width="1.2" height="136.60" fill="#0f6268"/>
<rect x="681.00" y="102.90" width="1.2" height="136.60" fill="#0f6268"/>
<rect x="77.20" y="102.90" width="4.08" height="9.00" fill="#00ffff" opacity="0.7"/>
<rect x="77.20" y="104.40" width="4.08" height="7.50" fill="#00ffff"/>
<rect x="81.28" y="231.80" width="54.72" height="7.70" fill="#00ffff" opacity="0.7"/>
<rect x="81.28" y="233.30" width="54.72" height="6.20" fill="#00ffff"/>
<rect x="136.00" y="102.90" width="54.40" height="9.00" fill="#00ffff" opacity="0.7"/>
<rect x="136.00" y="104.40" width="54.40" height="7.50" fill="#00ffff"/>
<rect x="190.40" y="231.80" width="54.72" height="7.70" fill="#00ffff" opacity="0.7"/>
<rect x="190.40" y="233.30" width="54.72" height="6.20" fill="#00ffff"/>
<rect x="245.12" y="102.90" width="54.40" height="9.00" fill="#00ffff" opacity="0.7"/>
<rect x="245.12" y="104.40" width="54.40" height="7.50" fill="#00ffff"/>
<rect x="299.52" y="231.80" width="54.72" height="7.70" fill="#00ffff" opacity="0.7"/>
<rect x="299.52" y="233.30" width="54.72" height="6.20" fill="#00ffff"/>
<rect x="354.24" y="102.90" width="54.40" height="9.00" fill="#00ffff" opacity="0.7"/>
<rect x="354.24" y="104.40" width="54.40" height="7.50" fill="#00ffff"/>
<rect x="408.64" y="231.80" width="54.72" height="7.70" fill="#00ffff" opacity="0.7"/>
<rect x="408.64" y="233.30" width="54.72" height="6.20" fill="#00ffff"/>
<rect x="463.36" y="102.90" width="54.40" height="9.00" fill="#00ffff" opacity="0.7"/>
<rect x="463.36" y="104.40" width="54.40" height="7.50" fill="#00ffff"/>
<rect x="517.76" y="231.80" width="54.72" height="7.70" fill="#00ffff" opacity="0.7"/>
<rect x="517.76" y="233.30" width="54.72" height="6.20" fill="#00ffff"/>
<rect x="572.48" y="102.90" width="54.40" height="9.00" fill="#00ffff" opacity="0.7"/>
<rect x="572.48" y="104.40" width="54.40" height="7.50" fill="#00ffff"/>
<rect x="626.88" y="231.80" width="54.72" height="7.70" fill="#00ffff" opacity="0.7"/>
<rect x="626.88" y="233.30" width="54.72" height="6.20" fill="#00ffff"/>
<rect x="681.60" y="102.90" width="6.14" height="9.00" fill="#00ffff" opacity="0.7"/>
<rect x="681.60" y="104.40" width="6.14" height="7.50" fill="#00ffff"/>
<rect x="80.68" y="248.30" width="1.2" height="138.20" fill="#5e5c10"/>
<rect x="135.40" y="248.30" width="1.2" height="138.20" fill="#5e5c10"/>
<rect x="189.80" y="248.30" width="1.2" height="138.20" fill="#5e5c10"/>
<rect x="244.52" y="248.30" width="1.2" height="138.20" fill="#5e5c10"/>
<rect x="298.92" y="248.30" width="1.2" height="138.20" fill="#5e5c10"/>
<rect x="353.64" y="248.30" width="1.2" height="138.20" fill="#5e5c10"/>
<rect x="408.04" y="248.30" width="1.2" height="138.20" fill="#5e5c10"/>
<rect x="462.76" y="248.30" width="1.2" height="138.20" fill="#5e5c10"/>
<rect x="517.16" y="248.30" width="1.2" height="138.20" fill="#5e5c10"/>
<rect x="571.88" y="248.30" width="1.2" height="138.20" fill="#5e5c10"/>
<rect x="626.28" y="248.30" width="1.2" height="138.20" fill="#5e5c10"/>
<rect x="681.00" y="248.30" width="1.2" height="138.20" fill="#5e5c10"/>
<rect x="77.20" y="248.30" width="4.08" height="8.70" fill="#ffff00" opacity="0.7"/>
<rect x="77.20" y="249.80" width="4.08" height="7.20" fill="#ffff00"/>
<rect x="81.28" y="379.80" width="54.72" height="6.70" fill="#ffff00" opacity="0.7"/>
<rect x="81.28" y="381.30" width="54.72" height="5.20" fill="#ffff00"/>
<rect x="136.00" y="248.30" width="54.40" height="8.70" fill="#ffff00" opacity="0.7"/>
<rect x="136.00" y="249.80" width="54.40" height="7.20" fill="#ffff00"/>
<rect x="190.40" y="379.80" width="54.72" height="6.70" fill="#ffff00" opacity="0.7"/>
<rect x="190.40" y="381.30" width="54.72" height="5.20" fill="#ffff00"/>
<rect x="245.12" y="248.30" width="54.40" height="8.70" fill="#ffff00" opacity="0.7"/>
<rect x="245.12" y="249.80" width="54.40" height="7.20" fill="#ffff00"/>
<rect x="299.52" y="379.80" width="54.72" height="6.70" fill="#ffff00" opacity="0.7"/>
<rect x="299.52" y="381.30" width="54.72" height="5.20" fill="#ffff00"/>
<rect x="354.24" y="248.30" width="54.40" height="8.70" fill="#ffff00" opacity="0.7"/>
<rect x="354.24" y="249.80" width="54.40" height="7.20" fill="#ffff00"/>
<rect x="408.64" y="379.80" width="54.72" height="6.70" fill="#ffff00" opacity="0.7"/>
<rect x="408.64" y="381.30" width="54.72" height="5.20" fill="#ffff00"/>
<rect x="463.36" y="248.30" width="54.40" height="8.70" fill="#ffff00" opacity="0.7"/>
<rect x="463.36" y="249.80" width="54.40" height="7.20" fill="#ffff00"/>
<rect x="517.76" y="379.80" width="54.72" height="6.70" fill="#ffff00" opacity="0.7"/>
<rect x="517.76" y="381.30" width="54.72" height="5.20" fill="#ffff00"/>
<rect x="572.48" y="248.30" width="54.40" height="8.70" fill="#ffff00" opacity="0.7"/>
<rect x="572.48" y="249.80" width="54.40" height="7.20" fill="#ffff00"/>
<rect x="626.88" y="379.80" width="54.72" height="6.70" fill="#ffff00" opacity="0.7"/>
<rect x="626.88" y="381.30" width="54.72" height="5.20" fill="#ffff00"/>
<rect x="681.60" y="248.30" width="6.14" height="8.70" fill="#ffff00" opacity="0.7"/>
<rect x="681.60" y="249.80" width="6.14" height="7.20" fill="#ffff00"/>
<path d="M58.7 169H68.5L73.8 174.6L68.5 180.2H58.7Z" fill="#00e0e8"/>
<text x="65" y="178.6" font-size="9.5" font-weight="bold" fill="#000" text-anchor="middle">1</text>
<path d="M59 382.6H69.6L75.2 387.6L69.6 392.6H59Z" fill="#f4f000"/>
<text x="65.5" y="391.5" font-size="9.5" font-weight="bold" fill="#000" text-anchor="middle">2</text>
<path d="M378.7 70H387.4V77.6L383 82.3L378.7 77.6Z" fill="#14d8e0"/>
<text x="383" y="77.4" font-size="7.5" font-weight="bold" fill="#05484c" text-anchor="middle">T</text>
<path d="M55.70 89.40H77.20M77.20 89.40V89.40H162.50V89.40H271.75V89.40H381.00V71.00H490.25V89.40H599.50V89.40H687.74M687.74 71.00V89.40" stroke="#d84800" stroke-width="1.6" stroke-opacity="0.88" stroke-linejoin="round" fill="none"/>
<text x="57.9" y="88.30" font-size="10.2" font-weight="bold" fill="#ff5c10" stroke="#ff5c10" stroke-width="0.45" textLength="11.4" lengthAdjust="spacingAndGlyphs">D0</text>
<path d="M72.2 85.40L77.6 89.40H72.2Z" fill="#d84800"/>
<path d="M55.70 111.27H77.20M77.20 111.27V111.27H162.50V92.87H271.75V111.27H381.00V92.87H490.25V92.87H599.50V92.87H687.74" stroke="#c400d8" stroke-width="1.8" stroke-opacity="0.88" stroke-linejoin="round" fill="none"/>
<text x="57.9" y="110.17" font-size="10.2" font-weight="bold" fill="#e400f4" stroke="#e400f4" stroke-width="0.45" textLength="11.4" lengthAdjust="spacingAndGlyphs">D1</text>
<path d="M72.2 107.27L77.6 111.27H72.2Z" fill="#c400d8"/>
<path d="M55.70 133.14H77.20M77.20 133.14V133.14H162.50V133.14H271.75V114.74H381.00V114.74H490.25V133.14H599.50V114.74H687.74" stroke="#c400d8" stroke-width="1.8" stroke-opacity="0.88" stroke-linejoin="round" fill="none"/>
<text x="57.9" y="132.04" font-size="10.2" font-weight="bold" fill="#e400f4" stroke="#e400f4" stroke-width="0.45" textLength="11.4" lengthAdjust="spacingAndGlyphs">D2</text>
<path d="M72.2 129.14L77.6 133.14H72.2Z" fill="#c400d8"/>
<path d="M55.70 155.01H77.20M77.20 136.61V136.61H162.50V136.61H271.75V155.01H381.00V155.01H490.25V155.01H599.50V136.61H687.74" stroke="#c400d8" stroke-width="1.8" stroke-opacity="0.88" stroke-linejoin="round" fill="none"/>
<text x="57.9" y="153.91" font-size="10.2" font-weight="bold" fill="#e400f4" stroke="#e400f4" stroke-width="0.45" textLength="11.4" lengthAdjust="spacingAndGlyphs">D3</text>
<path d="M72.2 151.01L77.6 155.01H72.2Z" fill="#c400d8"/>
<path d="M55.70 176.88H77.20M77.20 176.88V176.88H162.50V176.88H271.75V158.48H381.00V158.48H490.25V158.48H599.50V158.48H687.74" stroke="#c400d8" stroke-width="1.8" stroke-opacity="0.88" stroke-linejoin="round" fill="none"/>
<text x="57.9" y="175.78" font-size="10.2" font-weight="bold" fill="#e400f4" stroke="#e400f4" stroke-width="0.45" textLength="11.4" lengthAdjust="spacingAndGlyphs">D4</text>
<path d="M72.2 172.88L77.6 176.88H72.2Z" fill="#c400d8"/>
<path d="M55.70 198.75H77.20M77.20 180.35V180.35H162.50V180.35H271.75V180.35H381.00V198.75H490.25V180.35H599.50V198.75H687.74M687.74 180.35V198.75" stroke="#c400d8" stroke-width="1.8" stroke-opacity="0.88" stroke-linejoin="round" fill="none"/>
<text x="57.9" y="197.65" font-size="10.2" font-weight="bold" fill="#e400f4" stroke="#e400f4" stroke-width="0.45" textLength="11.4" lengthAdjust="spacingAndGlyphs">D5</text>
<path d="M72.2 194.75L77.6 198.75H72.2Z" fill="#c400d8"/>
<path d="M55.70 220.62H77.20M77.20 220.62V220.62H162.50V220.62H271.75V202.22H381.00V202.22H490.25V220.62H599.50V202.22H687.74" stroke="#c400d8" stroke-width="1.8" stroke-opacity="0.88" stroke-linejoin="round" fill="none"/>
<text x="57.9" y="219.52" font-size="10.2" font-weight="bold" fill="#e400f4" stroke="#e400f4" stroke-width="0.45" textLength="11.4" lengthAdjust="spacingAndGlyphs">D6</text>
<path d="M72.2 216.62L77.6 220.62H72.2Z" fill="#c400d8"/>
<path d="M55.70 242.49H77.20M77.20 224.09V224.09H162.50V242.49H271.75V242.49H381.00V242.49H490.25V224.09H599.50V224.09H687.74M687.74 224.09V242.49" stroke="#c400d8" stroke-width="1.8" stroke-opacity="0.88" stroke-linejoin="round" fill="none"/>
<text x="57.9" y="241.39" font-size="10.2" font-weight="bold" fill="#e400f4" stroke="#e400f4" stroke-width="0.45" textLength="11.4" lengthAdjust="spacingAndGlyphs">D7</text>
<path d="M72.2 238.49L77.6 242.49H72.2Z" fill="#c400d8"/>
<path d="M55.70 264.36H77.20M77.20 245.96V245.96H162.50V245.96H271.75V245.96H381.00V245.96H490.25V245.96H599.50V245.96H687.74" stroke="#c400d8" stroke-width="1.8" stroke-opacity="0.88" stroke-linejoin="round" fill="none"/>
<text x="57.9" y="263.26" font-size="10.2" font-weight="bold" fill="#e400f4" stroke="#e400f4" stroke-width="0.45" textLength="11.4" lengthAdjust="spacingAndGlyphs">D8</text>
<path d="M72.2 260.36L77.6 264.36H72.2Z" fill="#c400d8"/>
<path d="M55.70 286.23H77.20M77.20 267.83V267.83H162.50V286.23H271.75V267.83H381.00V267.83H490.25V267.83H599.50V286.23H687.74" stroke="#c400d8" stroke-width="1.8" stroke-opacity="0.88" stroke-linejoin="round" fill="none"/>
<text x="57.9" y="285.13" font-size="10.2" font-weight="bold" fill="#e400f4" stroke="#e400f4" stroke-width="0.45" textLength="11.4" lengthAdjust="spacingAndGlyphs">D9</text>
<path d="M72.2 282.23L77.6 286.23H72.2Z" fill="#c400d8"/>
<path d="M55.70 308.10H77.20M77.20 308.10V308.10H162.50V289.70H271.75V289.70H381.00V308.10H490.25V289.70H599.50V289.70H687.74M687.74 289.70V308.10" stroke="#c400d8" stroke-width="1.8" stroke-opacity="0.88" stroke-linejoin="round" fill="none"/>
<text x="57.1" y="307.00" font-size="10.2" font-weight="bold" fill="#e400f4" stroke="#e400f4" stroke-width="0.45" textLength="14.4" lengthAdjust="spacingAndGlyphs">D10</text>
<path d="M72.2 304.10L77.6 308.10H72.2Z" fill="#c400d8"/>
<path d="M55.70 329.97H77.20M77.20 329.97V329.97H162.50V311.57H271.75V329.97H381.00V329.97H490.25V311.57H599.50V329.97H687.74" stroke="#c400d8" stroke-width="1.8" stroke-opacity="0.88" stroke-linejoin="round" fill="none"/>
<text x="57.1" y="328.87" font-size="10.2" font-weight="bold" fill="#e400f4" stroke="#e400f4" stroke-width="0.45" textLength="14.4" lengthAdjust="spacingAndGlyphs">D11</text>
<path d="M72.2 325.97L77.6 329.97H72.2Z" fill="#c400d8"/>
<path d="M55.70 351.84H77.20M77.20 333.44V333.44H162.50V333.44H271.75V351.84H381.00V351.84H490.25V351.84H599.50V351.84H687.74" stroke="#c400d8" stroke-width="1.8" stroke-opacity="0.88" stroke-linejoin="round" fill="none"/>
<text x="57.1" y="350.74" font-size="10.2" font-weight="bold" fill="#e400f4" stroke="#e400f4" stroke-width="0.45" textLength="14.4" lengthAdjust="spacingAndGlyphs">D12</text>
<path d="M72.2 347.84L77.6 351.84H72.2Z" fill="#c400d8"/>
<path d="M55.70 373.71H77.20M77.20 355.31V355.31H162.50V355.31H271.75V355.31H381.00V355.31H490.25V355.31H599.50V373.71H687.74M687.74 355.31V373.71" stroke="#c400d8" stroke-width="1.8" stroke-opacity="0.88" stroke-linejoin="round" fill="none"/>
<text x="57.1" y="372.61" font-size="10.2" font-weight="bold" fill="#e400f4" stroke="#e400f4" stroke-width="0.45" textLength="14.4" lengthAdjust="spacingAndGlyphs">D13</text>
<path d="M72.2 369.71L77.6 373.71H72.2Z" fill="#c400d8"/>
<path d="M55.70 395.58H77.20M77.20 395.58V395.58H162.50V377.18H271.75V377.18H381.00V377.18H490.25V377.18H599.50V377.18H687.74" stroke="#c400d8" stroke-width="1.8" stroke-opacity="0.88" stroke-linejoin="round" fill="none"/>
<text x="57.1" y="394.48" font-size="10.2" font-weight="bold" fill="#e400f4" stroke="#e400f4" stroke-width="0.45" textLength="14.4" lengthAdjust="spacingAndGlyphs">D14</text>
<path d="M72.2 391.58L77.6 395.58H72.2Z" fill="#c400d8"/>
<path d="M55.70 417.45H77.20M77.20 399.05V399.05H162.50V417.45H271.75V417.45H381.00V399.05H490.25V417.45H599.50V399.05H687.74M687.74 399.05V417.45" stroke="#c400d8" stroke-width="1.8" stroke-opacity="0.88" stroke-linejoin="round" fill="none"/>
<text x="57.1" y="416.35" font-size="10.2" font-weight="bold" fill="#e400f4" stroke="#e400f4" stroke-width="0.45" textLength="14.4" lengthAdjust="spacingAndGlyphs">D15</text>
<path d="M72.2 413.45L77.6 417.45H72.2Z" fill="#c400d8"/>
<path d="M727.5 148V70H747.3V163Z" fill="#333"/>
<path d="M727.5 148V70H747.3" stroke="#8c8c8c" stroke-width="1.2" fill="none"/>
<path d="M727.5 148L747.3 163V70" stroke="#6a6a6a" stroke-width="1" fill="none"/>
<text transform="translate(742.4 113.4) rotate(-90)" font-size="15.2" font-weight="bold" fill="#e8e4c0" text-anchor="middle" textLength="55.5" lengthAdjust="spacingAndGlyphs">Decode</text>
<rect x="51" y="430" width="698" height="30" fill="#4a4a4a"/>
<rect x="51.2" y="432" width="23.099999999999994" height="26" fill="#5c5c5c"/>
<rect x="53.800000000000004" y="433.3" width="17.899999999999995" height="24.3" fill="#2e2e2e"/>
<text x="62.75" y="451.3" font-size="16.6" fill="#16b4c4" stroke="#16b4c4" stroke-width="0.45" text-anchor="middle"></text>
<path d="M63.6 451.5V439.6L59.6 442.8" stroke="#14b4c4" stroke-width="2" fill="none" stroke-linejoin="round"/>
<rect x="74.8" y="432" width="129.5" height="25.5" fill="#121212"/>
<rect x="204" y="432" width="23.400000000000006" height="26" fill="#5c5c5c"/>
<rect x="206.6" y="433.3" width="18.200000000000006" height="24.3" fill="#2e2e2e"/>
<text x="215.70" y="451.3" font-size="16.6" fill="#ecc418" stroke="#ecc418" stroke-width="0.45" text-anchor="middle">2</text>
<rect x="227.7" y="432" width="129" height="25.5" fill="#121212"/>
<rect x="357" y="432" width="22.5" height="26" fill="#5c5c5c"/>
<rect x="359.6" y="433.3" width="17.3" height="24.3" fill="#2e2e2e"/>
<text x="368.25" y="451.3" font-size="16.6" fill="#189818" stroke="#189818" stroke-width="0.45" text-anchor="middle">3</text>
<rect x="380" y="432" width="129" height="25.5" fill="#121212"/>
<path d="M75.6 446.2C77 443.5 78.8 443.2 80.5 445.5S84 449.8 86.4 445.6" stroke="#c0c0a8" stroke-width="1.5" fill="none"/>
<text x="88.6" y="448.6" font-size="12.7" fill="#bcbca4" textLength="28.6" lengthAdjust="spacingAndGlyphs">1.00V</text>
<text x="118.8" y="448.6" font-size="12.7" fill="#bcbca4" textLength="11.2" lengthAdjust="spacingAndGlyphs">1X</text>
<rect x="228.8" y="444.2" width="9.6" height="1.7" fill="#d0d0b8"/>
<path d="M228.8 448.3h1.7m0.9 0h1.7m0.9 0h1.7m0.9 0h1.7" stroke="#d0d0b8" stroke-width="1.5"/>
<text x="240.5" y="448.6" font-size="12.7" fill="#bcbca4" textLength="27.4" lengthAdjust="spacingAndGlyphs">1.00V</text>
<text x="271.2" y="448.6" font-size="12.7" fill="#bcbca4" textLength="10.6" lengthAdjust="spacingAndGlyphs">1X</text>
<text x="438.8" y="448.8" font-size="12.8" fill="#bcbca4" text-anchor="middle" textLength="21.5" lengthAdjust="spacingAndGlyphs">OFF</text>
<rect x="510.6" y="431.7" width="21.1" height="25.9" fill="#7000b0"/>
<rect x="511.6" y="432.7" width="18.6" height="22.6" fill="#a01cec"/>
<path d="M511.6 455.3V432.7H530.2" stroke="#b44cf4" stroke-width="1" fill="none"/>
<text x="521.2" y="445.8" font-size="10.8" font-weight="bold" font-family="Liberation Serif" fill="#000" text-anchor="middle" textLength="13.7" lengthAdjust="spacingAndGlyphs">LA</text>
<rect x="533.9" y="432.8" width="127.4" height="24" fill="#000" stroke="#9210d8" stroke-width="2"/>
<rect x="540.00" y="438.5" width="4.6" height="4.6" fill="#9412d4"/>
<rect x="546.15" y="438.5" width="4.6" height="4.6" fill="#9412d4"/>
<rect x="552.30" y="438.5" width="4.6" height="4.6" fill="#9412d4"/>
<rect x="558.45" y="438.5" width="4.6" height="4.6" fill="#9412d4"/>
<rect x="570.55" y="438.5" width="4.6" height="4.6" fill="#9412d4"/>
<rect x="576.70" y="438.5" width="4.6" height="4.6" fill="#9412d4"/>
<rect x="582.85" y="438.5" width="4.6" height="4.6" fill="#9412d4"/>
<rect x="589.00" y="438.5" width="4.6" height="4.6" fill="#9412d4"/>
<rect x="601.10" y="438.5" width="4.6" height="4.6" fill="#9412d4"/>
<rect x="607.25" y="438.5" width="4.6" height="4.6" fill="#9412d4"/>
<rect x="613.40" y="438.5" width="4.6" height="4.6" fill="#9412d4"/>
<rect x="619.55" y="438.5" width="4.6" height="4.6" fill="#9412d4"/>
<rect x="631.65" y="438.5" width="4.6" height="4.6" fill="#9412d4"/>
<rect x="637.80" y="438.5" width="4.6" height="4.6" fill="#9412d4"/>
<rect x="643.95" y="438.5" width="4.6" height="4.6" fill="#9412d4"/>
<rect x="650.10" y="438.5" width="4.6" height="4.6" fill="#ff5a00"/>
<text x="539.40" y="453.8" font-size="9" fill="#8a10c8">15</text>
<text x="570.10" y="453.8" font-size="9" fill="#8a10c8">11</text>
<text x="600.80" y="453.8" font-size="9" fill="#8a10c8">7</text>
<text x="631.50" y="453.8" font-size="9" fill="#8a10c8">3</text>
<rect x="662.9" y="432" width="18.3" height="25.8" fill="#000"/>
<g stroke="#e8e8e8" stroke-width="1.1" fill="none"><path d="M672.5 438V452"/><path d="M669 443.5V446Q669 447.5 672.5 449.5"/><path d="M676 441.2V443.5Q676 445 672.5 447"/></g>
<g fill="#ececec"><circle cx="672.5" cy="438.4" r="1.6"/><circle cx="669" cy="443.4" r="1.5"/><circle cx="676" cy="441.1" r="1.5"/><circle cx="672.5" cy="451.9" r="2.1"/></g>
<rect x="682.5" y="433" width="64.5" height="10.8" fill="#1c1c1c"/>
<rect x="682.5" y="445.2" width="64.5" height="11.6" fill="#1c1c1c"/>
<text x="719.3" y="442.4" font-size="11.2" fill="#e8e8e8" text-anchor="middle" textLength="30" lengthAdjust="spacingAndGlyphs">08:53</text>
<text x="715.4" y="455.8" font-size="12.2" fill="#ececec" text-anchor="middle" textLength="61.7" lengthAdjust="spacingAndGlyphs">2020.06.04</text>
</svg></body></html>
